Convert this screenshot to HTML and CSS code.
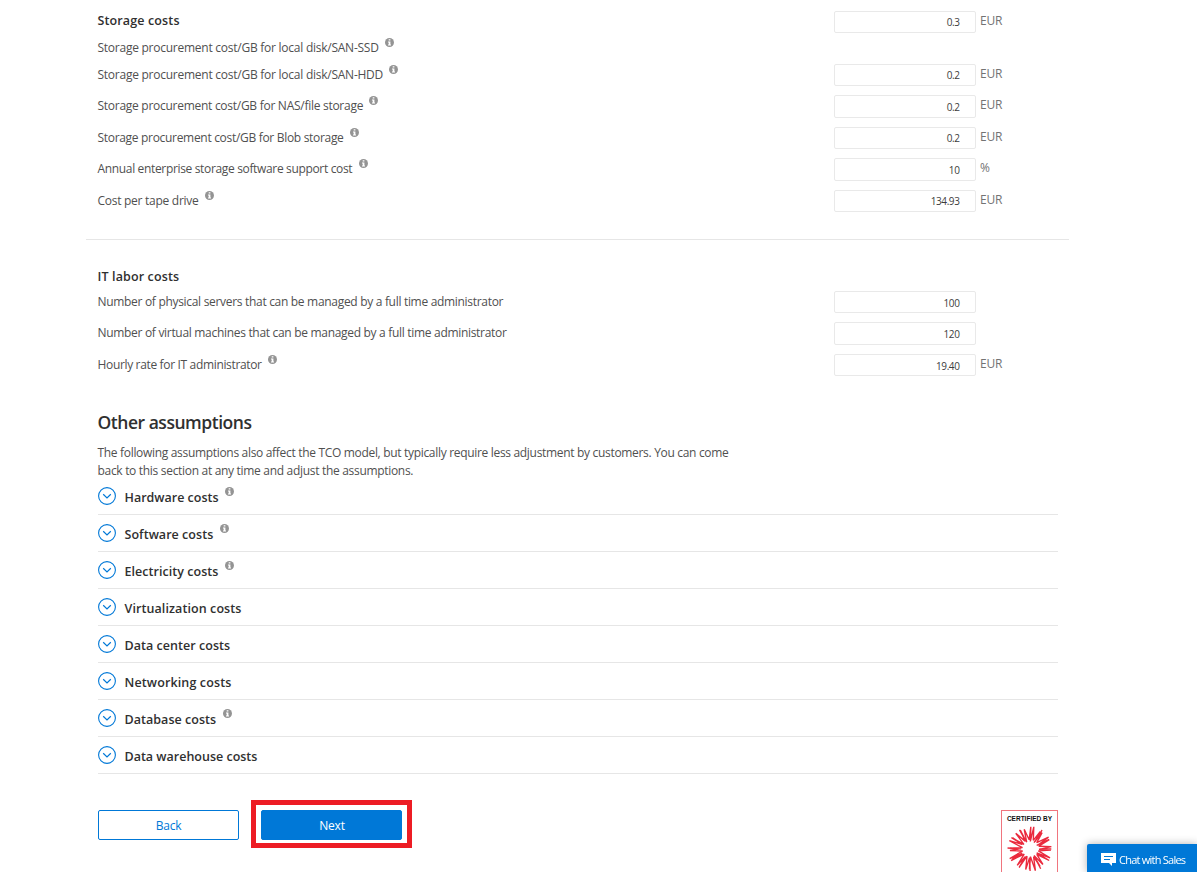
FILE: index.html
```html
<!DOCTYPE html>
<html lang="en">
<head>
<meta charset="utf-8">
<title>Adjust assumptions</title>
<link rel="stylesheet" href="styles.css">
</head>
<body>
<svg width="0" height="0" class="defs">
  <symbol id="info" viewBox="0 0 9 9"><circle cx="4.5" cy="4.5" r="4.5" fill="#949494"/><path d="M3.7 1.3h1.7v1.3H3.7zM3 3.4h2.4v3.1H6v1H3v-1h.7V4.4H3z" fill="#fff"/></symbol>
  <symbol id="chev" viewBox="0 0 18 18"><circle cx="9" cy="9" r="8.4" fill="none" stroke="#0078d7" stroke-width="1.1"/><path d="M5.2 7.3 9 11l3.8-3.7" fill="none" stroke="#0078d7" stroke-width="1.2"/></symbol>
</svg>
<main class="page">
  <section class="storage">
    <div class="row first">
      <div><h3 class="title">Storage costs</h3>
      <div class="label"><span class="s25">Storage procurement cost/GB for local disk/SAN-SSD</span><svg class="info"><use href="#info"/></svg></div></div>
      <div class="field"><div class="input up">0.3</div><span class="unit">EUR</span></div>
    </div>
    <div class="row r31">
      <div class="label"><span class="s25">Storage procurement cost/GB for local disk/SAN-HDD</span><svg class="info"><use href="#info"/></svg></div>
      <div class="field"><div class="input">0.2</div><span class="unit">EUR</span></div>
    </div>
    <div class="row r32">
      <div class="label"><span class="s27">Storage procurement cost/GB for NAS/file storage</span><svg class="info"><use href="#info"/></svg></div>
      <div class="field"><div class="input tall">0.2</div><span class="unit">EUR</span></div>
    </div>
    <div class="row r31">
      <div class="label"><span class="s31">Storage procurement cost/GB for Blob storage</span><svg class="info"><use href="#info"/></svg></div>
      <div class="field"><div class="input">0.2</div><span class="unit">EUR</span></div>
    </div>
    <div class="row r32">
      <div class="label"><span class="s34">Annual enterprise storage software support cost</span><svg class="info"><use href="#info"/></svg></div>
      <div class="field"><div class="input tall">10</div><span class="unit">%</span></div>
    </div>
    <div class="row">
      <div class="label"><span class="s27">Cost per tape drive</span><svg class="info"><use href="#info"/></svg></div>
      <div class="field"><div class="input">134.93</div><span class="unit">EUR</span></div>
    </div>
  </section>
  <section class="labor">
    <h3 class="title">IT labor costs</h3>
    <div class="row r31">
      <div class="label"><span class="s31">Number of physical servers that can be managed by a full time administrator</span></div>
      <div class="field"><div class="input tall short">100</div></div>
    </div>
    <div class="row r32">
      <div class="label"><span class="s31">Number of virtual machines that can be managed by a full time administrator</span></div>
      <div class="field"><div class="input tall">120</div></div>
    </div>
    <div class="row">
      <div class="label"><span class="s34">Hourly rate for IT administrator</span><svg class="info"><use href="#info"/></svg></div>
      <div class="field"><div class="input tall short">19.40</div><span class="unit">EUR</span></div>
    </div>
  </section>
  <section class="other">
    <h2>Other assumptions</h2>
    <p><span class="s32">The following assumptions also affect the TCO model, but typically require less adjustment by customers. You can come</span><br><span class="s31">back to this section at any time and adjust the assumptions.</span></p>
    <ul class="accordion">
      <li><svg class="chev"><use href="#chev"/></svg><span>Hardware costs</span><svg class="info"><use href="#info"/></svg></li>
      <li><svg class="chev"><use href="#chev"/></svg><span class="wide-1">Software costs</span><svg class="info"><use href="#info"/></svg></li>
      <li><svg class="chev"><use href="#chev"/></svg><span class="wide-1">Electricity costs</span><svg class="info"><use href="#info"/></svg></li>
      <li><svg class="chev"><use href="#chev"/></svg><span class="wide-2">Virtualization costs</span></li>
      <li><svg class="chev"><use href="#chev"/></svg><span class="wide-1">Data center costs</span></li>
      <li><svg class="chev"><use href="#chev"/></svg><span class="wide-3">Networking costs</span></li>
      <li><svg class="chev"><use href="#chev"/></svg><span class="wide-1">Database costs</span><svg class="info"><use href="#info"/></svg></li>
      <li><svg class="chev"><use href="#chev"/></svg><span>Data warehouse costs</span></li>
    </ul>
  </section>
  <footer class="actions">
    <a class="btn back">Back</a>
    <div class="highlight"><a class="btn next">Next</a></div>
    <div class="badge">
      <div class="badge-text">CERTIFIED BY</div>
      <svg class="burst" viewBox="-23 -23 46 46" id="burst"></svg>
    </div>
  </footer>
</main>
<div class="chat">
  <svg width="15" height="13" viewBox="0 0 15 13"><path d="M0 0h15v10H11v3L8 10H0z" fill="#fff"/><path d="M3 3.5h9M3 6.5h6" stroke="#0078d7" stroke-width="1.2"/></svg>
  <span>Chat with Sales</span>
</div>
<script src="burst.js"></script>
</body>
</html>
```
FILE: styles.css
```css
* { box-sizing: border-box; }
html, body { height: 100%; overflow: hidden; }
body { margin: 0; background: #fff; color: #505050; font: 12px/20px "Open Sans", "Noto Sans", sans-serif; }
.defs { position: absolute; }
.page { width: 983px; margin-left: 86px; }
.storage { height: 240px; padding: 10px 0 0 11.5px; border-bottom: 1px solid #e6e6e6; }
.title { margin: 0; padding-top: 1px; font-size: 12.5px; font-weight: 600; line-height: 20px; letter-spacing: .13px; color: #303030; }
.row { display: grid; grid-template-columns: 736.5px 1fr; align-items: start; height: 22px; }
.row.first { height: 54px; }
.row.first .label { margin-top: 6px; }
.row.r31 { height: 31px; }
.row.r32 { height: 32px; }
.label, .accordion li { display: flex; align-items: center; }
.label { padding-top: 1px; }
.s25 { letter-spacing: -.25px; }
.s27 { letter-spacing: -.272px; }
.s31 { letter-spacing: -.308px; }
.s32 { letter-spacing: -.316px; }
.s34 { letter-spacing: -.34px; }
.info { width: 9px; height: 9px; margin: -12px 0 0 6.3px; flex: none; }
.field { display: flex; align-items: flex-start; gap: 4px; }
.input { width: 142px; height: 22px; padding: 0 15.5px 0 0; border: 1px solid #e9e9e9; border-radius: 2px; text-align: right; font-size: 10px; line-height: 21px; letter-spacing: -.4px; color: #3c3c3c; }
.input.tall { height: 23px; line-height: 22px; }
.input.up { margin-top: 1px; }
.input.tall.short { height: 22px; }
.unit { color: #737373; letter-spacing: -.27px; }
.first .unit { margin-top: 1px; }
.labor { padding: 26px 0 0 11.5px; height: 162px; }
.labor .title { margin-bottom: 4px; }
.other { width: 972px; padding: 7px 0 0 11.5px; }
.other h2 { margin: 0; font-size: 17.5px; font-weight: 600; line-height: 26px; letter-spacing: -.47px; color: #303030; }
.other p { margin: 9px 0 0; line-height: 18px; white-space: nowrap; }
.accordion { margin: -2px 0 0; padding: 0; list-style: none; font-size: 12.5px; font-weight: 600; color: #303030; }
.accordion li { height: 37px; border-bottom: 1px solid #e6e6e6; }
.accordion span { padding-top: 3px; }
.accordion .wide-1 { letter-spacing: .04px; }
.accordion .wide-2 { letter-spacing: .09px; }
.accordion .wide-3 { letter-spacing: .13px; }
.accordion .chev { width: 18px; height: 18px; margin-right: 9px; }
.accordion .info { margin: -9px 0 0 6.5px; }
.actions { display: flex; align-items: flex-start; padding: 26px 11px 0 12px; height: 98px; }
.btn { display: block; width: 141px; height: 30px; border: 1px solid #0078d7; border-radius: 2px; text-align: center; line-height: 29px; letter-spacing: -.2px; }
.back { margin-top: 10px; color: #0078d7; }
.highlight { width: 161px; height: 48px; margin-left: 12px; padding: 5px; border: 5px solid #ed1c24; }
.next { background: #0078d7; color: #fff; padding-left: 1px; }
.badge { width: 57px; height: 75px; margin: 10px 0 0 auto; border: 1px solid #f0757e; text-align: center; }
.badge-text { display: flex; justify-content: center; height: 15px; font: bold 6.5px/16px "Liberation Sans", Arial, sans-serif; color: #111; white-space: nowrap; }
.burst { display: block; width: 46px; height: 46px; margin: 0 auto; }
.burst path { fill: none; stroke: #ea2a3d; stroke-width: 1.35; }
.chat { position: fixed; right: 0; bottom: 0; display: flex; align-items: center; gap: 3px; width: 110px; height: 28px; padding: 3px 0 0 14px; background: #0078d7; color: #fff; border-radius: 2px 0 0 0; box-shadow: 0 0 8px rgba(0,0,0,.3); font-size: 11px; letter-spacing: -.76px; white-space: nowrap; }
```
FILE: burst.js
```js
// Zigzag starburst between an inner and an outer ring.
const burst = document.getElementById('burst');
const spikes = 38;
let d = '';
for (let i = 0; i < spikes * 2; i++) {
  const a = (i / (spikes * 2)) * Math.PI * 2 + Math.sin(i * 5.3) * 0.12;
  const r = i % 2 ? 8.6 + Math.sin(i * 2.1) : 21.3 + Math.sin(i * 1.7) * 1.2;
  d += (i ? 'L' : 'M') + (r * Math.cos(a)).toFixed(2) + ' ' + (r * Math.sin(a)).toFixed(2);
}
const path = document.createElementNS('http://www.w3.org/2000/svg', 'path');
path.setAttribute('d', d + 'Z');
path.setAttribute('stroke-linejoin', 'bevel');
burst.appendChild(path);
```
